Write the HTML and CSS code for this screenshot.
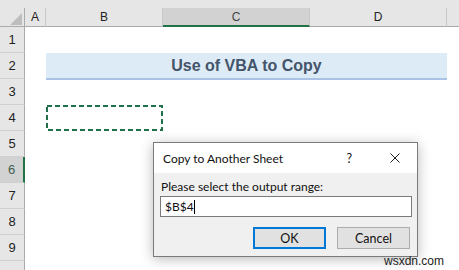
FILE: index.html
```html
<!DOCTYPE html>
<html>
    <head>
        <title>Use of VBA to Copy</title>
        <link rel="stylesheet" href="styles.css">
    </head>
    <body>
        <div class='app'>
            <div class='topStrip'></div>
            <div class='colHeads'>
                <div class='colHead corner'>
                    <svg viewBox='0 0 24 19' width='24' height='19'>
                        <polygon points='22,5 22,17 10,17' fill='#bdbdbd'/>
                    </svg>
                </div>
                <div class='colHead colA'>A</div>
                <div class='colHead colB'>B</div>
                <div class='colHead colC selected'>C</div>
                <div class='colHead colD'>D</div>
                <div class='colHead colE'></div>
            </div>
            <div class='sheetBody'>
                <div class='rowNums'>
                    <div class='rowNum'>1</div>
                    <div class='rowNum'>2</div>
                    <div class='rowNum'>3</div>
                    <div class='rowNum'>4</div>
                    <div class='rowNum'>5</div>
                    <div class='rowNum selected'>6</div>
                    <div class='rowNum'>7</div>
                    <div class='rowNum'>8</div>
                    <div class='rowNum'>9</div>
                    <div class='rowNum'></div>
                </div>
                <div class='cells'>
                    <div class='titleCell'>Use of VBA to Copy</div>
                    <div class='marquee'>
                        <svg viewBox='0 0 117 26' width='117' height='26'>
                            <rect x='1' y='1' width='115' height='24' fill='none'
                                  stroke='#21704a'
                                  stroke-width='2'
                                  stroke-dasharray='5 3'/>
                        </svg>
                    </div>
                </div>
            </div>

            <div class='dialog'>
                <div class='dialogTitle'>
                    <span class='dialogName'>Copy to Another Sheet</span>
                    <span class='helpBtn'>?</span>
                    <svg class='closeBtn' viewBox='0 0 10 10' width='10' height='10'>
                        <path d='M0.5 0.5L9.5 9.5M9.5 0.5L0.5 9.5' stroke='#222' stroke-width='1'/>
                    </svg>
                </div>
                <div class='dialogBody'>
                    <div class='prompt'>Please select the output range:</div>
                    <div class='rangeInput'>$B$4<span class='caret'></span></div>
                    <div class='buttons'>
                        <div class='btn okBtn'>OK</div>
                        <div class='btn'>Cancel</div>
                    </div>
                </div>
            </div>

            <div class='watermark'>wsxdn.com</div>
        </div>
    </body>
</html>
```

FILE: styles.css
```css
html, body {
    margin: 0;
    padding: 0;
    background-color: #fff;
}
.app {
    position: relative;
    width: 459px;
    height: 270px;
    overflow: hidden;
    font-family: "Liberation Sans", Arial, sans-serif;
}
.topStrip {
    height: 8px;
    background-color: #e6e6e6;
}
.colHeads {
    display: flex;
    height: 19px;
    background-color: #e6e6e6;
}
.colHead {
    box-sizing: border-box;
    height: 19px;
    border-right: 1px solid #c8c8c8;
    border-bottom: 1px solid #ababab;
    font-size: 12px;
    color: #222;
    display: flex;
    align-items: center;
    justify-content: center;
}
.corner {
    width: 25px;
    border-right: 1px solid #ababab;
    align-items: stretch;
}
.colA { width: 21px; }
.colB { width: 117px; }
.colC { width: 147px; }
.colD { width: 137px; }
.colE { flex-grow: 1; border-right: none; }
.colHead.selected {
    background-color: #d2d2d2;
    border-bottom: 2px solid #217346;
    color: #444;
}
.sheetBody {
    display: flex;
}
.rowNums {
    width: 25px;
    display: flex;
    flex-direction: column;
}
.rowNum {
    box-sizing: border-box;
    height: 26px;
    background-color: #e6e6e6;
    border-right: 1px solid #ababab;
    border-bottom: 1px solid #d0d0d0;
    font-size: 13px;
    color: #222;
    display: flex;
    align-items: center;
    justify-content: center;
}
.rowNum.selected {
    background-color: #d2d2d2;
    border-right: 2px solid #217346;
    color: #3f5f4f;
}
.cells {
    flex-grow: 1;
    display: grid;
    grid-template-columns: 21px 117px 147px 137px 1fr;
    grid-template-rows: repeat(10, 26px);
}
.titleCell {
    grid-column: 2 / 5;
    grid-row: 2;
    box-sizing: border-box;
    height: 27px;
    background-color: #ddebf7;
    border-bottom: 2px solid #a9c2e6;
    color: #44546a;
    font-weight: bold;
    font-size: 16px;
    display: flex;
    align-items: center;
    justify-content: center;
}
.marquee {
    grid-column: 2;
    grid-row: 4;
}
.marquee svg {
    display: block;
}
.dialog {
    position: absolute;
    left: 153px;
    top: 142px;
    width: 265px;
    height: 115px;
    box-sizing: border-box;
    border: 1px solid #7a7a7a;
    background-color: #f0f0f0;
    box-shadow: 0 2px 12px rgba(0, 0, 0, 0.28);
    font-family: Lato, "Liberation Sans", sans-serif;
    font-size: 12px;
    color: #111;
}
.dialogTitle {
    height: 30px;
    background-color: #fff;
    display: flex;
    align-items: center;
    padding: 0 0 0 9px;
}
.dialogName {
    flex-grow: 1;
}
.helpBtn {
    font-size: 12.5px;
    margin-right: 38px;
}
.closeBtn {
    margin-right: 17px;
}
.dialogBody {
    padding: 6px 6px 0 6px;
}
.prompt {
    height: 17px;
    line-height: 15px;
    padding-left: 1px;
}
.rangeInput {
    box-sizing: border-box;
    height: 21px;
    width: 252px;
    border: 1px solid #7a7a7a;
    background-color: #fff;
    padding: 0 4px;
    line-height: 19px;
    display: flex;
    align-items: center;
}
.caret {
    display: inline-block;
    width: 1px;
    height: 14px;
    background-color: #000;
}
.buttons {
    display: flex;
    justify-content: flex-end;
    gap: 11px;
    margin-top: 10px;
    padding-right: 1px;
}
.btn {
    box-sizing: border-box;
    width: 73px;
    height: 22px;
    border: 1px solid #adadad;
    background-color: #e1e1e1;
    display: flex;
    align-items: center;
    justify-content: center;
    font-size: 12.5px;
}
.okBtn {
    border: 2px solid #0078d7;
}
.watermark {
    position: absolute;
    left: 384px;
    top: 254px;
    font-family: "Liberation Sans", Arial, sans-serif;
    font-size: 12px;
    color: #222;
}
```
